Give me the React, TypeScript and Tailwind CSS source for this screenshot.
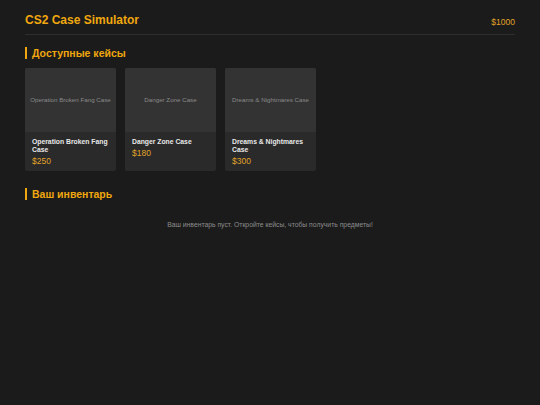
const cases = [
  { name: "Operation Broken Fang Case", price: 250 },
  { name: "Danger Zone Case", price: 180 },
  { name: "Dreams & Nightmares Case", price: 300 },
];

export default function App() {
  return (
    <div className="min-h-[405px] w-full bg-[#1b1b1b] px-[25px] font-['Liberation_Sans',Arial,sans-serif]">
      <header className="flex h-[35px] items-end justify-between border-b border-[#2e2e2e] pb-[8px]">
        <h1 className="text-[12px] font-bold leading-none text-[#f0a70f]">CS2 Case Simulator</h1>
        <span className="text-[8.5px] leading-none text-[#e0a22a]">$1000</span>
      </header>

      <section className="pt-[12px]">
        <h2 className="border-l-2 border-[#f0a70f] pl-[5px] text-[10.5px] font-bold leading-[12px] text-[#f0a70f]">
          Доступные кейсы
        </h2>
        <div className="mt-[9px] flex gap-[9px]">
          {cases.map((c) => (
            <div key={c.name} className="flex h-[103px] w-[91px] flex-col overflow-hidden rounded-[2px] bg-[#2a2a2a]">
              <div className="flex h-[64px] items-center justify-center bg-[#333333] px-1">
                <span className="text-center text-[6.2px] leading-none text-[#8a8a8a]">{c.name}</span>
              </div>
              <div className="pl-[7px] pr-[5px] pt-[6px]">
                <div className="text-[6.8px] font-bold leading-[8px] text-[#e8e8e8]">{c.name}</div>
                <div className="mt-[2px] text-[8.5px] leading-[10px] text-[#e0a22a]">${c.price}</div>
              </div>
            </div>
          ))}
        </div>
      </section>

      <section className="pt-[17px]">
        <h2 className="border-l-2 border-[#f0a70f] pl-[5px] text-[10.5px] font-bold leading-[12px] text-[#f0a70f]">
          Ваш инвентарь
        </h2>
        <p className="mt-[20px] text-center text-[6.8px] text-[#8c8c8c]">
          Ваш инвентарь пуст. Откройте кейсы, чтобы получить предметы!
        </p>
      </section>
    </div>
  );
}
